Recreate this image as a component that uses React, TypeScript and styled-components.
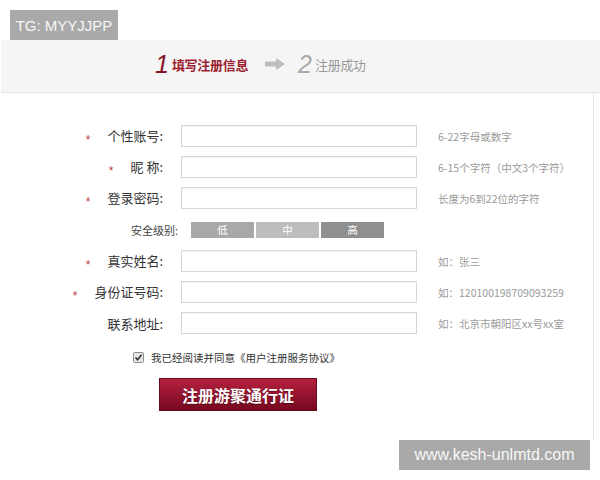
import React from "react";
import styled, { createGlobalStyle } from "styled-components";

const GlobalStyle = createGlobalStyle`
  *, *::before, *::after { box-sizing: border-box; }
  html, body { margin: 0; padding: 0; background: #fff; }
  body { font-family: "Noto Sans CJK SC", "Noto Sans", sans-serif; }
`;

const Page = styled.div`
  position: relative;
  width: 600px;
  height: 480px;
  overflow: hidden;
  padding-top: 40px;
  background: #fff;
`;

const Watermark = styled.div<{ $top: number; $left: number; $w: number; $h: number; $size: number }>`
  position: absolute;
  top: ${(p) => p.$top}px;
  left: ${(p) => p.$left}px;
  width: ${(p) => p.$w}px;
  height: ${(p) => p.$h}px;
  background: #a9a9a9;
  color: #f7f7f7;
  font-family: "Liberation Sans", Arial, sans-serif;
  font-size: ${(p) => p.$size}px;
  display: flex;
  align-items: center;
  justify-content: center;
  white-space: nowrap;
`;

const StepBand = styled.div`
  height: 53px;
  margin-left: 1px;
  background: #f5f5f5;
  border-bottom: 1px solid #e4e4e4;
  display: flex;
  align-items: center;
  padding-left: 154px;
  padding-bottom: 4px;
`;

const StepNum = styled.span<{ $active?: boolean }>`
  font-family: "Liberation Sans", Arial, sans-serif;
  font-style: italic;
  font-size: 25px;
  line-height: 1;
  color: ${(p) => (p.$active ? "#861526" : "#a9a9a9")};
  margin-right: 3px;
`;

const StepText = styled.span<{ $active?: boolean }>`
  font-size: 13px;
  font-weight: ${(p) => (p.$active ? 700 : 400)};
  color: ${(p) => (p.$active ? "#9b1f31" : "#999")};
  letter-spacing: -0.3px;
`;

const StepArrow = styled.svg`
  margin: 0 13px 0 17px;
`;

const Panel = styled.div`
  width: 594px;
  height: 347px;
  border-right: 1px solid #e6e6e6;
  padding-top: 32px;
`;

const Form = styled.form`
  display: grid;
  grid-template-columns: 163px 236px 150px;
  grid-template-rows: repeat(3, 22px) 23px repeat(3, 22px);
  column-gap: 18px;
  row-gap: 9px;
  align-items: center;
`;

const Label = styled.label`
  text-align: right;
  font-size: 13px;
  color: #333;
  white-space: nowrap;
`;

const Star = styled.span`
  color: #c23a4f;
  font-family: "Liberation Sans", Arial, sans-serif;
  font-size: 12px;
  vertical-align: -3px;
  margin-right: 17px;
`;

const Input = styled.input`
  width: 236px;
  height: 22px;
  border: 1px solid #d6d6d6;
  box-shadow: inset 0 1px 1px rgba(0, 0, 0, 0.05);
  background: #fff;
  padding: 0 4px;
  outline: none;
`;

const Hint = styled.span`
  padding-left: 3px;
  font-size: 10.5px;
  color: #9a9a9a;
  white-space: nowrap;
`;

const SafetyRow = styled.div`
  grid-column: 1 / -1;
  display: flex;
  align-items: center;
`;

const SafetyLabel = styled.span`
  width: 178px;
  text-align: right;
  font-size: 11px;
  color: #444;
  margin-right: 13px;
`;

const Levels = styled.div`
  display: flex;
  gap: 2px;
`;

const Level = styled.span<{ $bg: string }>`
  width: 63px;
  height: 16px;
  background: ${(p) => p.$bg};
  color: #fff;
  font-size: 10.5px;
  line-height: 16px;
  text-align: center;
`;

const CheckRow = styled.div`
  margin: 16px 0 0 133px;
  height: 14px;
  display: flex;
  align-items: center;
  gap: 7px;
  font-size: 10.5px;
  color: #333;
  white-space: nowrap;
`;

const SubmitButton = styled.button`
  display: block;
  margin: 14px 0 0 159px;
  width: 158px;
  height: 33px;
  border: 1px solid #6c0a1b;
  background: linear-gradient(to bottom, #b4223d 0%, #951430 50%, #76091d 100%);
  color: #fff;
  font-family: "Noto Sans CJK SC", sans-serif;
  font-size: 16px;
  font-weight: 700;
  text-shadow: 0 1px 1px rgba(0, 0, 0, 0.35);
  cursor: pointer;
  padding: 0;
`;

type Field = { label: string; star: boolean; hint: string; type?: string };

const topFields: Field[] = [
  { label: "个性账号:", star: true, hint: "6-22字母或数字" },
  { label: "昵 称:", star: true, hint: "6-15个字符（中文3个字符）" },
  { label: "登录密码:", star: true, hint: "长度为6到22位的字符", type: "password" },
];

const bottomFields: Field[] = [
  { label: "真实姓名:", star: true, hint: "如：张三" },
  { label: "身份证号码:", star: true, hint: "如：120100198709093259" },
  { label: "联系地址:", star: false, hint: "如：北京市朝阳区xx号xx室" },
];

const FieldRow = ({ f }: { f: Field }) => (
  <>
    <Label>
      {f.star && <Star>*</Star>}
      {f.label}
    </Label>
    <Input type={f.type ?? "text"} />
    <Hint>{f.hint}</Hint>
  </>
);

export default function App() {
  return (
    <>
      <GlobalStyle />
      <Page>
        <StepBand>
          <StepNum $active>1</StepNum>
          <StepText $active>填写注册信息</StepText>
          <StepArrow width="20" height="12" viewBox="0 0 20 12">
            <path d="M0 3.5 H11 V0 L20 6 L11 12 V8.5 H0 Z" fill="#bdbdbd" />
          </StepArrow>
          <StepNum>2</StepNum>
          <StepText>注册成功</StepText>
        </StepBand>
        <Panel>
          <Form onSubmit={(e) => e.preventDefault()}>
            {topFields.map((f) => (
              <FieldRow key={f.label} f={f} />
            ))}
            <SafetyRow>
              <SafetyLabel>安全级别:</SafetyLabel>
              <Levels>
                <Level $bg="#a8a8a8">低</Level>
                <Level $bg="#bdbdbd">中</Level>
                <Level $bg="#8f8f8f">高</Level>
              </Levels>
            </SafetyRow>
            {bottomFields.map((f) => (
              <FieldRow key={f.label} f={f} />
            ))}
          </Form>
          <CheckRow>
            <svg width="11" height="11" viewBox="0 0 11 11">
              <rect x="0.5" y="0.5" width="10" height="10" rx="1" fill="#e6e6e6" stroke="#8c8c8c" />
              <path d="M2.5 5.5 L4.6 7.8 L8.6 2.8" fill="none" stroke="#333" strokeWidth="1.6" />
            </svg>
            <span>我已经阅读并同意《用户注册服务协议》</span>
          </CheckRow>
          <SubmitButton type="button">注册游聚通行证</SubmitButton>
        </Panel>
        <Watermark $top={10} $left={10} $w={108} $h={30} $size={15}>
          TG: MYYJJPP
        </Watermark>
        <Watermark $top={440} $left={399} $w={191} $h={30} $size={16}>
          www.kesh-unlmtd.com
        </Watermark>
      </Page>
    </>
  );
}
